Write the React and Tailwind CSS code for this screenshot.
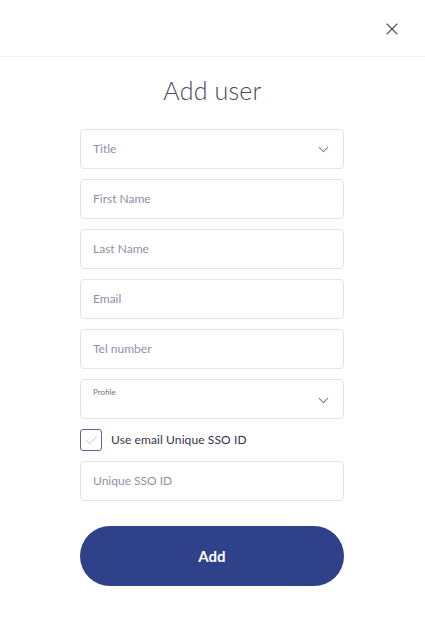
import { ChevronDown, X, Check } from "lucide-react";

const fields = ["First Name", "Last Name", "Email", "Tel number"];

export default function App() {
  return (
    <div className="w-[425px] h-[620px] bg-white font-['Lato','Noto_Sans',sans-serif] text-[#3c3c4a]">
      {/* header */}
      <div className="h-[57px] flex items-center justify-end pr-[23px] border-b border-[#eef0f3]">
        <button className="text-[#555] pt-[2px]">
          <X size={20} strokeWidth={1.4} />
        </button>
      </div>

      <div className="flex flex-col">
        <h1 className="mt-[15px] text-center text-[25px] font-light leading-[36px] text-[#4b4a5a] tracking-[0.2px]">Add user</h1>

        <div className="mt-[21px] ml-[80px] w-[264px] flex flex-col gap-[10px]">
          <div className="h-[40px] rounded-[4px] border border-[#e1e4ec] flex items-center justify-between pl-[12px] pr-[11px]">
            <span className="text-[12px] text-[#8d91a5]">Title</span>
            <ChevronDown size={17} strokeWidth={1.5} className="text-[#7d8296]" />
          </div>

          {fields.map((f) => (
            <div key={f} className="h-[40px] rounded-[4px] border border-[#e1e4ec] flex items-center pl-[12px]">
              <span className="text-[12px] text-[#8d91a5]">{f}</span>
            </div>
          ))}

          <div className="h-[40px] rounded-[4px] border border-[#e1e4ec] flex justify-between pl-[12px] pr-[11px]">
            <span className="text-[8px] text-[#6f7488] pt-[6px]">Profile</span>
            <ChevronDown size={17} strokeWidth={1.5} className="text-[#7d8296] mt-[12px]" />
          </div>

          <div className="flex items-center gap-[9px] h-[22px]">
            <div className="w-[22px] h-[22px] rounded-[3px] border border-[#5b6796] flex items-center justify-center">
              <Check size={15} strokeWidth={2} className="text-[#d9dbe0]" />
            </div>
            <span className="text-[12px] text-[#34324a] tracking-[0.1px]">Use email Unique SSO ID</span>
          </div>

          <div className="h-[40px] rounded-[4px] border border-[#e1e4ec] flex items-center pl-[12px]">
            <span className="text-[12px] text-[#8d91a5]">Unique SSO ID</span>
          </div>

          <button className="mt-[15px] h-[60px] rounded-full bg-[#2f4189] text-white text-[15px] font-bold">
            Add
          </button>
        </div>
      </div>
    </div>
  );
}
